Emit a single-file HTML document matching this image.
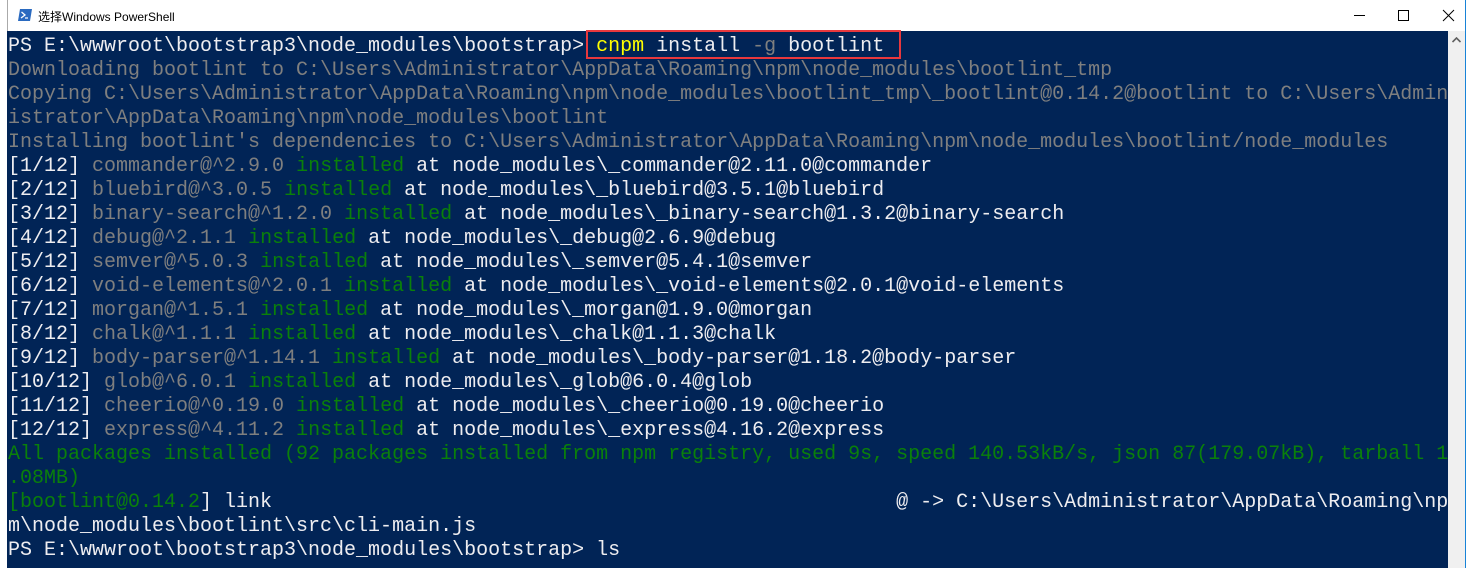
<!DOCTYPE html>
<html><head><meta charset="utf-8"><style>
html,body{margin:0;padding:0;width:1473px;height:568px;overflow:hidden;background:#fff;position:relative}
#tb{position:absolute;left:7px;top:0;width:1459px;height:31px;background:#fff;border-left:1px solid #aaa}
#title{position:absolute;left:30px;top:8px;font:12px "Liberation Sans","Noto Sans CJK SC",sans-serif;color:#000}
#con{position:absolute;left:7px;top:31px;width:1441px;height:537px;background:#012456;overflow:hidden}
#sb{position:absolute;left:1448px;top:31px;width:17px;height:537px;background:#f0f0f0}
#edge{position:absolute;left:1465px;top:0;width:1px;height:568px;background:#1883d7}
.l{position:absolute;left:1px;height:24px;font:20px/24px "Liberation Mono",monospace;white-space:pre;color:#eeedf0}
.g{color:#7f7f7f}.n{color:#0a800a}.y{color:#ffff00}
#box{position:absolute;left:586px;top:30px;width:311px;height:25px;border:2px solid #e8383d}
</style></head><body>
<div id="tb">
<svg style="position:absolute;left:10px;top:9px" width="14" height="12" viewBox="0 0 14 12"><path d="M2 0H14L12 12H0Z" fill="#2a6ac0"/><path d="M3.5 3L7 6L3 9" stroke="#fff" stroke-width="1.3" fill="none"/><path d="M7 9H10" stroke="#fff" stroke-width="1.2"/></svg>
<div id="title">选择Windows PowerShell</div>
<svg style="position:absolute;left:1338px;top:9px" width="120" height="14"><path d="M8 6.5H19" stroke="#000"/><path d="M52.5 1.5h10v10h-10z" stroke="#000" fill="none"/><path d="M97 1L108 12M108 1L97 12" stroke="#000"/></svg>
</div>
<div id="con">
<div class="l" style="top:4px">PS E:\wwwroot\bootstrap3\node_modules\bootstrap> <span class="y">cnpm</span> install <span class="g">-g</span> bootlint</div>
<div class="l g" style="top:28px">Downloading bootlint to C:\Users\Administrator\AppData\Roaming\npm\node_modules\bootlint_tmp</div>
<div class="l g" style="top:52px">Copying C:\Users\Administrator\AppData\Roaming\npm\node_modules\bootlint_tmp\_bootlint@0.14.2@bootlint to C:\Users\Admin</div>
<div class="l g" style="top:76px">istrator\AppData\Roaming\npm\node_modules\bootlint</div>
<div class="l g" style="top:100px">Installing bootlint's dependencies to C:\Users\Administrator\AppData\Roaming\npm\node_modules\bootlint/node_modules</div>
<div class="l" style="top:124px">[1/12] <span class="g">commander@^2.9.0</span> <span class="n">installed</span> at node_modules\_commander@2.11.0@commander</div>
<div class="l" style="top:148px">[2/12] <span class="g">bluebird@^3.0.5</span> <span class="n">installed</span> at node_modules\_bluebird@3.5.1@bluebird</div>
<div class="l" style="top:172px">[3/12] <span class="g">binary-search@^1.2.0</span> <span class="n">installed</span> at node_modules\_binary-search@1.3.2@binary-search</div>
<div class="l" style="top:196px">[4/12] <span class="g">debug@^2.1.1</span> <span class="n">installed</span> at node_modules\_debug@2.6.9@debug</div>
<div class="l" style="top:220px">[5/12] <span class="g">semver@^5.0.3</span> <span class="n">installed</span> at node_modules\_semver@5.4.1@semver</div>
<div class="l" style="top:244px">[6/12] <span class="g">void-elements@^2.0.1</span> <span class="n">installed</span> at node_modules\_void-elements@2.0.1@void-elements</div>
<div class="l" style="top:268px">[7/12] <span class="g">morgan@^1.5.1</span> <span class="n">installed</span> at node_modules\_morgan@1.9.0@morgan</div>
<div class="l" style="top:292px">[8/12] <span class="g">chalk@^1.1.1</span> <span class="n">installed</span> at node_modules\_chalk@1.1.3@chalk</div>
<div class="l" style="top:316px">[9/12] <span class="g">body-parser@^1.14.1</span> <span class="n">installed</span> at node_modules\_body-parser@1.18.2@body-parser</div>
<div class="l" style="top:340px">[10/12] <span class="g">glob@^6.0.1</span> <span class="n">installed</span> at node_modules\_glob@6.0.4@glob</div>
<div class="l" style="top:364px">[11/12] <span class="g">cheerio@^0.19.0</span> <span class="n">installed</span> at node_modules\_cheerio@0.19.0@cheerio</div>
<div class="l" style="top:388px">[12/12] <span class="g">express@^4.11.2</span> <span class="n">installed</span> at node_modules\_express@4.16.2@express</div>
<div class="l n" style="top:412px">All packages installed (92 packages installed from npm registry, used 9s, speed 140.53kB/s, json 87(179.07kB), tarball 1</div>
<div class="l n" style="top:436px">.08MB)</div>
<div class="l" style="top:460px"><span class="n">[bootlint@0.14.2</span>] link                                                    @ -> C:\Users\Administrator\AppData\Roaming\np</div>
<div class="l" style="top:484px">m\node_modules\bootlint\src\cli-main.js</div>
<div class="l" style="top:508px">PS E:\wwwroot\bootstrap3\node_modules\bootstrap> ls</div>
</div>
<div id="box"></div>
<div id="sb"><svg style="position:absolute;left:4px;top:6px" width="9" height="6"><path d="M0.5 5L4.5 1L8.5 5" stroke="#606060" stroke-width="1.6" fill="none"/></svg></div>
<div id="edge"></div>
</body></html>
